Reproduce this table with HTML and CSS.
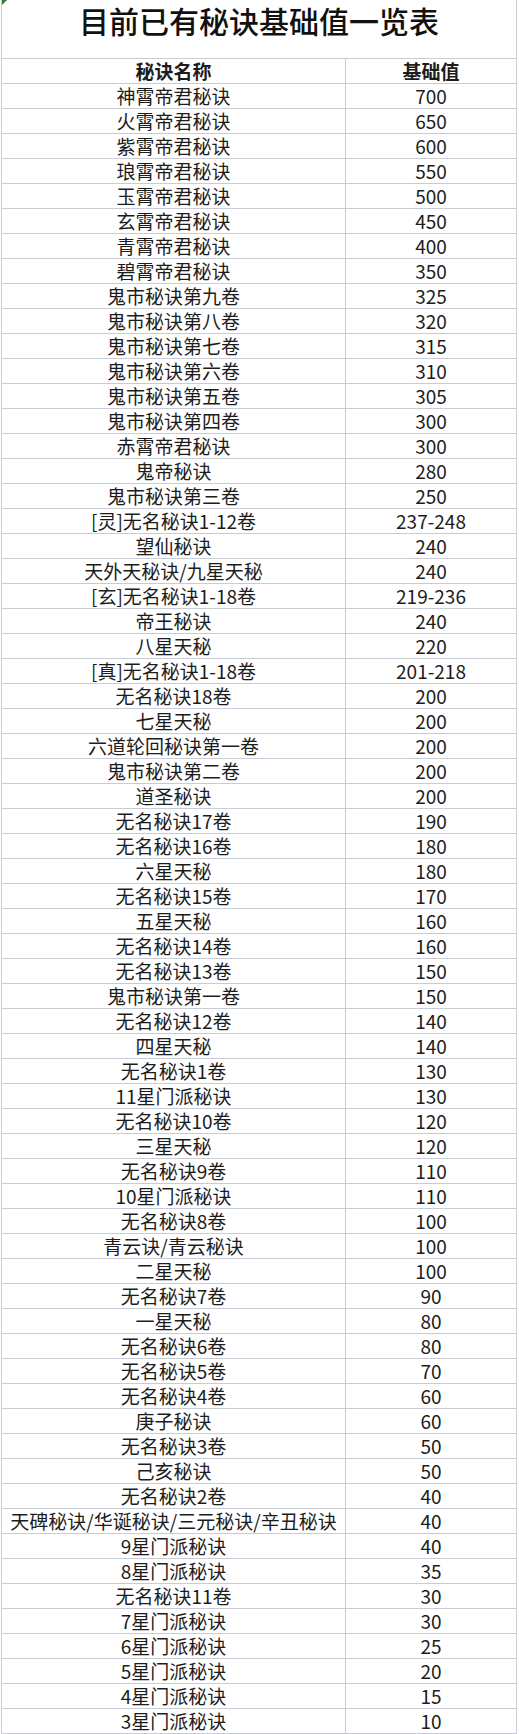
FILE: index.html
```html
<!DOCTYPE html>
<html lang="zh-CN">
<head>
<meta charset="utf-8">
<title>目前已有秘诀基础值一览表</title>
<link rel="stylesheet" href="styles.css">
</head>
<body>
<div class="sheet">
  <div class="title">目前已有秘诀基础值一览表</div>
  <div class="row head"><div class="c1">秘诀名称</div><div class="c2">基础值</div></div>
  <div class="row"><div class="c1">神霄帝君秘诀</div><div class="c2">700</div></div>
  <div class="row"><div class="c1">火霄帝君秘诀</div><div class="c2">650</div></div>
  <div class="row"><div class="c1">紫霄帝君秘诀</div><div class="c2">600</div></div>
  <div class="row"><div class="c1">琅霄帝君秘诀</div><div class="c2">550</div></div>
  <div class="row"><div class="c1">玉霄帝君秘诀</div><div class="c2">500</div></div>
  <div class="row"><div class="c1">玄霄帝君秘诀</div><div class="c2">450</div></div>
  <div class="row"><div class="c1">青霄帝君秘诀</div><div class="c2">400</div></div>
  <div class="row"><div class="c1">碧霄帝君秘诀</div><div class="c2">350</div></div>
  <div class="row"><div class="c1">鬼市秘诀第九卷</div><div class="c2">325</div></div>
  <div class="row"><div class="c1">鬼市秘诀第八卷</div><div class="c2">320</div></div>
  <div class="row"><div class="c1">鬼市秘诀第七卷</div><div class="c2">315</div></div>
  <div class="row"><div class="c1">鬼市秘诀第六卷</div><div class="c2">310</div></div>
  <div class="row"><div class="c1">鬼市秘诀第五卷</div><div class="c2">305</div></div>
  <div class="row"><div class="c1">鬼市秘诀第四卷</div><div class="c2">300</div></div>
  <div class="row"><div class="c1">赤霄帝君秘诀</div><div class="c2">300</div></div>
  <div class="row"><div class="c1">鬼帝秘诀</div><div class="c2">280</div></div>
  <div class="row"><div class="c1">鬼市秘诀第三卷</div><div class="c2">250</div></div>
  <div class="row"><div class="c1">[灵]无名秘诀1-12卷</div><div class="c2">237-248</div></div>
  <div class="row"><div class="c1">望仙秘诀</div><div class="c2">240</div></div>
  <div class="row"><div class="c1">天外天秘诀/九星天秘</div><div class="c2">240</div></div>
  <div class="row"><div class="c1">[玄]无名秘诀1-18卷</div><div class="c2">219-236</div></div>
  <div class="row"><div class="c1">帝王秘诀</div><div class="c2">240</div></div>
  <div class="row"><div class="c1">八星天秘</div><div class="c2">220</div></div>
  <div class="row"><div class="c1">[真]无名秘诀1-18卷</div><div class="c2">201-218</div></div>
  <div class="row"><div class="c1">无名秘诀18卷</div><div class="c2">200</div></div>
  <div class="row"><div class="c1">七星天秘</div><div class="c2">200</div></div>
  <div class="row"><div class="c1">六道轮回秘诀第一卷</div><div class="c2">200</div></div>
  <div class="row"><div class="c1">鬼市秘诀第二卷</div><div class="c2">200</div></div>
  <div class="row"><div class="c1">道圣秘诀</div><div class="c2">200</div></div>
  <div class="row"><div class="c1">无名秘诀17卷</div><div class="c2">190</div></div>
  <div class="row"><div class="c1">无名秘诀16卷</div><div class="c2">180</div></div>
  <div class="row"><div class="c1">六星天秘</div><div class="c2">180</div></div>
  <div class="row"><div class="c1">无名秘诀15卷</div><div class="c2">170</div></div>
  <div class="row"><div class="c1">五星天秘</div><div class="c2">160</div></div>
  <div class="row"><div class="c1">无名秘诀14卷</div><div class="c2">160</div></div>
  <div class="row"><div class="c1">无名秘诀13卷</div><div class="c2">150</div></div>
  <div class="row"><div class="c1">鬼市秘诀第一卷</div><div class="c2">150</div></div>
  <div class="row"><div class="c1">无名秘诀12卷</div><div class="c2">140</div></div>
  <div class="row"><div class="c1">四星天秘</div><div class="c2">140</div></div>
  <div class="row"><div class="c1">无名秘诀1卷</div><div class="c2">130</div></div>
  <div class="row"><div class="c1">11星门派秘诀</div><div class="c2">130</div></div>
  <div class="row"><div class="c1">无名秘诀10卷</div><div class="c2">120</div></div>
  <div class="row"><div class="c1">三星天秘</div><div class="c2">120</div></div>
  <div class="row"><div class="c1">无名秘诀9卷</div><div class="c2">110</div></div>
  <div class="row"><div class="c1">10星门派秘诀</div><div class="c2">110</div></div>
  <div class="row"><div class="c1">无名秘诀8卷</div><div class="c2">100</div></div>
  <div class="row"><div class="c1">青云诀/青云秘诀</div><div class="c2">100</div></div>
  <div class="row"><div class="c1">二星天秘</div><div class="c2">100</div></div>
  <div class="row"><div class="c1">无名秘诀7卷</div><div class="c2">90</div></div>
  <div class="row"><div class="c1">一星天秘</div><div class="c2">80</div></div>
  <div class="row"><div class="c1">无名秘诀6卷</div><div class="c2">80</div></div>
  <div class="row"><div class="c1">无名秘诀5卷</div><div class="c2">70</div></div>
  <div class="row"><div class="c1">无名秘诀4卷</div><div class="c2">60</div></div>
  <div class="row"><div class="c1">庚子秘诀</div><div class="c2">60</div></div>
  <div class="row"><div class="c1">无名秘诀3卷</div><div class="c2">50</div></div>
  <div class="row"><div class="c1">己亥秘诀</div><div class="c2">50</div></div>
  <div class="row"><div class="c1">无名秘诀2卷</div><div class="c2">40</div></div>
  <div class="row"><div class="c1">天碑秘诀/华诞秘诀/三元秘诀/辛丑秘诀</div><div class="c2">40</div></div>
  <div class="row"><div class="c1">9星门派秘诀</div><div class="c2">40</div></div>
  <div class="row"><div class="c1">8星门派秘诀</div><div class="c2">35</div></div>
  <div class="row"><div class="c1">无名秘诀11卷</div><div class="c2">30</div></div>
  <div class="row"><div class="c1">7星门派秘诀</div><div class="c2">30</div></div>
  <div class="row"><div class="c1">6星门派秘诀</div><div class="c2">25</div></div>
  <div class="row"><div class="c1">5星门派秘诀</div><div class="c2">20</div></div>
  <div class="row"><div class="c1">4星门派秘诀</div><div class="c2">15</div></div>
  <div class="row"><div class="c1">3星门派秘诀</div><div class="c2">10</div></div>
</div>
</body>
</html>
```
FILE: styles.css
```css
html, body {
  margin: 0;
  padding: 0;
  background: #ffffff;
}
body {
  font-family: "Noto Sans CJK SC", "Noto Sans", sans-serif;
  color: #1c1c1c;
}
.sheet {
  position: relative;
  width: 514px;
  margin-left: 1px;
  border-left: 1px solid #c8ccd7;
  border-right: 1px solid #c8ccd7;
}
.sheet::before {
  content: "";
  position: absolute;
  left: 0;
  top: 0;
  width: 0;
  height: 0;
  border-top: 5px solid #2f7a3a;
  border-right: 5px solid transparent;
}
.title {
  height: 58px;
  border-bottom: 1px solid #c8ccd7;
  text-align: center;
  font-size: 30px;
  font-weight: 500;
  line-height: 40px;
  color: #111;
}
.row {
  display: grid;
  grid-template-columns: 344px 170px;
  height: 24px;
  border-bottom: 1px solid #c8ccd7;
  font-size: 19px;
  line-height: 24px;
}
.c1 {
  border-right: 1px solid #c8ccd7;
  text-align: center;
  white-space: nowrap;
}
.c2 {
  text-align: center;
  white-space: nowrap;
}
.head {
  font-weight: 700;
}
```
